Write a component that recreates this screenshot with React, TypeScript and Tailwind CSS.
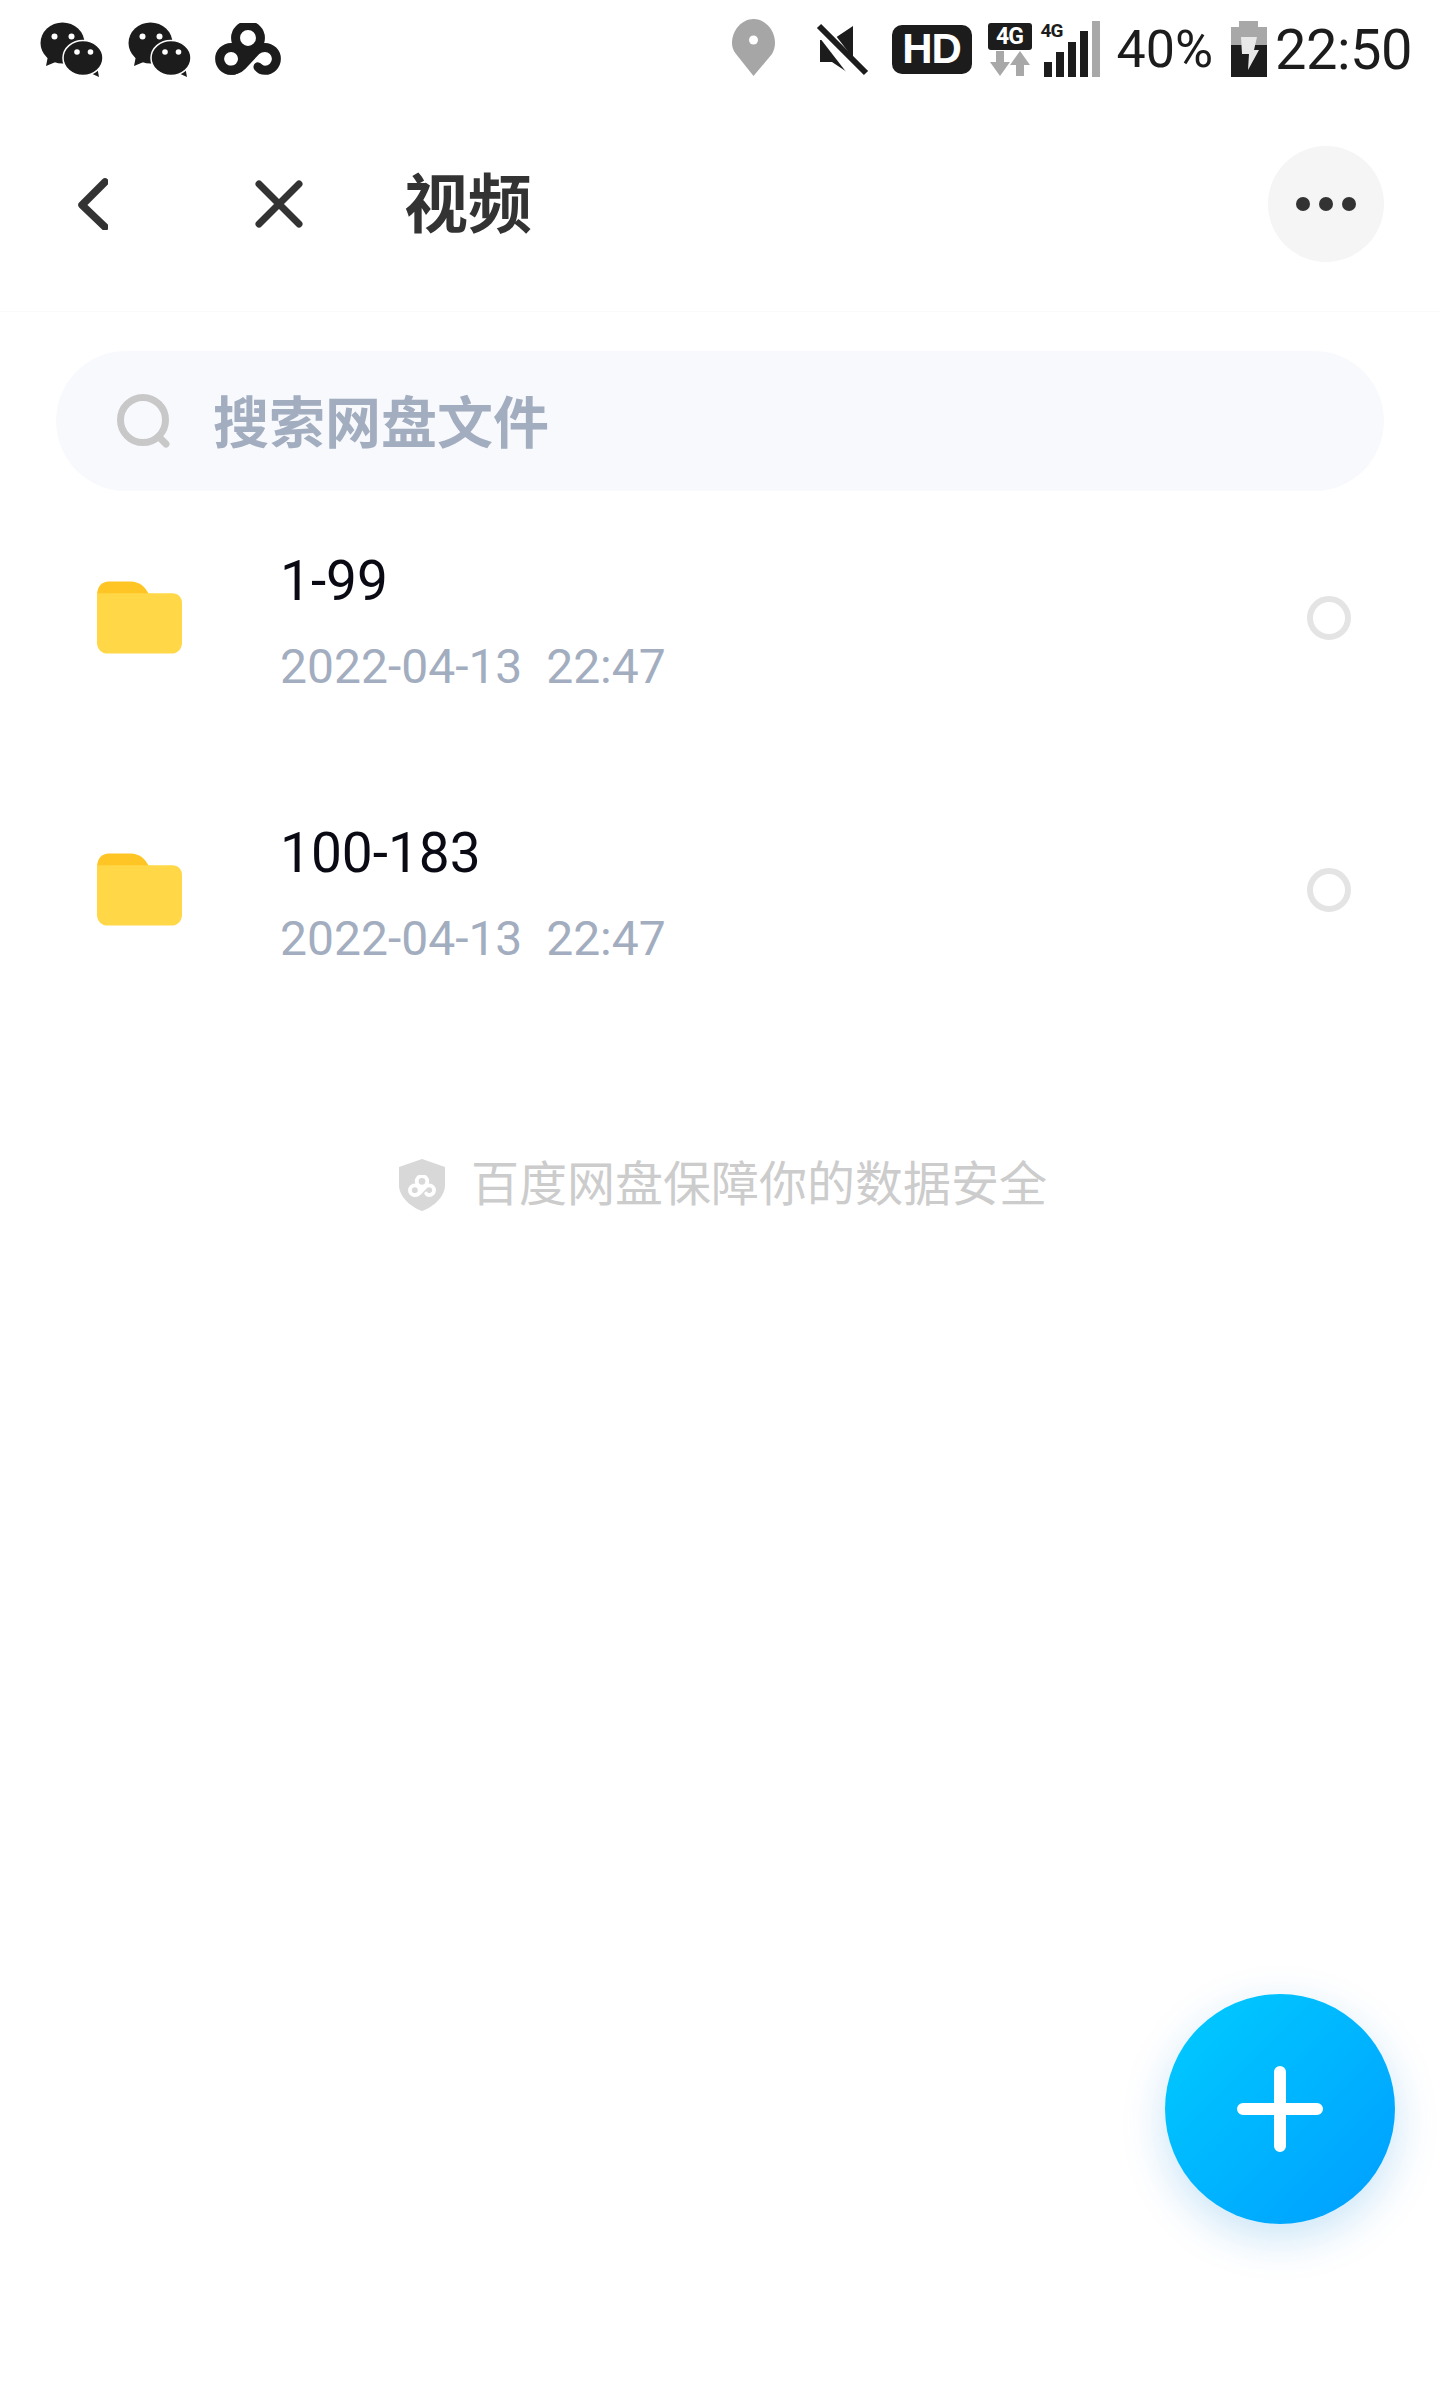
const FONT = "font-['Roboto','Noto_Sans_CJK_SC',sans-serif]";

// ── Status bar icons ───────────────────────────────
function WeChatIcon() {
  return (
    <svg width="64" height="55" viewBox="0 0 64 55" className="shrink-0">
      <path d="M8 34 L6 44 L18 39 Z" fill="#1c1c1c" />
      <ellipse cx="22.5" cy="21" rx="22" ry="20.5" fill="#1c1c1c" />
      <circle cx="14.5" cy="14.5" r="3" fill="#fff" />
      <circle cx="31.5" cy="14.5" r="3" fill="#fff" />
      <path d="M48 50 L59 55 L57 44 Z" fill="#1c1c1c" />
      <ellipse cx="43" cy="36" rx="20" ry="17.5" fill="#1c1c1c" stroke="#fff" strokeWidth="1.5" />
      <circle cx="37" cy="30" r="2.8" fill="#fff" />
      <circle cx="50.5" cy="30" r="2.8" fill="#fff" />
    </svg>
  );
}

function CloudLogo({ size = 66, color = "#1c1c1c" }: { size?: number; color?: string }) {
  return (
    <svg width={size} height={size * 0.8} viewBox="0 0 66 53" fill="none" stroke={color} strokeWidth="9" className="shrink-0">
      <circle cx="33" cy="15" r="12.5" />
      <circle cx="16" cy="36" r="11.5" />
      <path d="M16 47.5 C21 47.5 24 46 27 43 L41 28 C44 25.5 47 24.5 50 24.5 A11.5 11.5 0 1 1 50 47.5 C47 47.5 45 46.5 43 44" strokeLinecap="round" />
    </svg>
  );
}

function PinIcon() {
  return (
    <svg width="43" height="57" viewBox="0 0 43 57" className="mb-[4px] shrink-0">
      <path d="M21.5 0 C33 0 43 11 43 24 C43 28 42 31 40 35 L21.5 57 L4 35 C1 31 0 28 0 24 C0 11 10 0 21.5 0 Z" fill="#a6a6a6" />
      <circle cx="21.5" cy="21" r="4.5" fill="#fff" />
    </svg>
  );
}

function MuteIcon() {
  return (
    <svg width="53" height="53" viewBox="0 0 53 53" className="shrink-0">
      <path d="M4 17 L16 17 L37 3 L37 53 L16 39 L4 39 Z" fill="#1c1c1c" />
      <path d="M-2 -4 L46 58" stroke="#fff" strokeWidth="14" />
      <path d="M3 3 L50 50" stroke="#1c1c1c" strokeWidth="6" />
    </svg>
  );
}

function SignalBars() {
  const bars = [
    { h: 15, c: "#1c1c1c" },
    { h: 25, c: "#1c1c1c" },
    { h: 35, c: "#1c1c1c" },
    { h: 46, c: "#1c1c1c" },
    { h: 56, c: "#a8a8a8" },
  ];
  return (
    <div className="relative flex h-[56px] w-[56px] items-end gap-[4px]">
      <span className="absolute left-[-3px] top-[-1px] text-[19px] font-bold leading-[22px] tracking-[-1px] text-[#1c1c1c]">4G</span>
      {bars.map((b, i) => (
        <div key={i} className="w-[8px]" style={{ height: b.h, backgroundColor: b.c }} />
      ))}
    </div>
  );
}

function BatteryIcon() {
  return (
    <svg width="36" height="56" viewBox="0 0 36 56" className="shrink-0">
      <rect x="8" y="0" width="19" height="7" fill="#a8a8a8" />
      <rect x="0" y="6" width="36" height="18" fill="#a8a8a8" />
      <rect x="0" y="24" width="36" height="32" fill="#1c1c1c" />
      <path d="M10 16 L26 16 L23 29 L28 29 L17 49 L18 33 L11 33 Z" fill="#e8e8e8" />
    </svg>
  );
}

function StatusBar() {
  return (
    <div className="flex h-[100px] shrink-0 items-center pb-[2px] pl-[40px] pr-[28px]">
      <div className="flex items-center gap-[24px]">
        <WeChatIcon />
        <WeChatIcon />
        <div className="ml-[-1px]">
          <CloudLogo />
        </div>
      </div>
      <div className="ml-auto flex items-center">
        <PinIcon />
        <div className="ml-[41px]">
          <MuteIcon />
        </div>
        <div className="ml-[23px] flex h-[49px] w-[80px] items-center justify-center rounded-[10px] bg-[#1c1c1c] font-['Liberation_Sans',sans-serif] text-[42px] font-bold leading-none tracking-[-1px] text-white">
          HD
        </div>
        <div className="ml-[16px] flex w-[44px] flex-col items-center gap-[1px]">
          <div className="flex h-[27px] w-[44px] items-center justify-center rounded-[3px] bg-[#1c1c1c] text-[23px] font-bold leading-none tracking-[-1px] text-white">
            4G
          </div>
          <svg width="40" height="25" viewBox="0 0 40 25">
            <path d="M6 0 H14 V11 H20 L10 25 L0 11 H6 Z" fill="#a8a8a8" />
            <path d="M26 25 H34 V14 H40 L30 0 L20 14 H26 Z" fill="#a8a8a8" />
          </svg>
        </div>
        <div className="ml-[12px]">
          <SignalBars />
        </div>
        <span className="ml-[17px] mt-[2px] text-[52px] leading-none text-[#1c1c1c]">40%</span>
        <div className="ml-[18px]">
          <BatteryIcon />
        </div>
        <span className="ml-[8px] mt-[2px] text-[56px] leading-none tracking-[-0.5px] text-[#1c1c1c]">22:50</span>
      </div>
    </div>
  );
}

// ── Page parts ─────────────────────────────────────
function Header() {
  return (
    <div className="flex h-[212px] shrink-0 items-center border-b border-[#fafafa] pb-[3px] pl-[78px] pr-[56px]">
      <svg width="30" height="52" viewBox="0 0 30 52" fill="none" stroke="#333" strokeWidth="7.5" strokeLinecap="round" strokeLinejoin="round" className="shrink-0">
        <path d="M27 4 L4 27 L27 49" />
      </svg>
      <svg width="48" height="48" viewBox="0 0 48 48" fill="none" stroke="#333" strokeWidth="7" strokeLinecap="round" className="ml-[147px] shrink-0">
        <path d="M4 4 L44 44 M44 4 L4 44" />
      </svg>
      <h1 className="ml-[101px] mt-[4px] text-[64px] font-bold leading-none text-[#333]">视频</h1>
      <button className="ml-auto flex h-[116px] w-[116px] items-center justify-center gap-[9px] rounded-full bg-[#f5f5f5]">
        <span className="h-[14px] w-[14px] rounded-full bg-[#333]" />
        <span className="h-[14px] w-[14px] rounded-full bg-[#333]" />
        <span className="h-[14px] w-[14px] rounded-full bg-[#333]" />
      </button>
    </div>
  );
}

function SearchBar() {
  return (
    <div className="mx-[56px] mt-[39px] flex h-[140px] shrink-0 items-center rounded-full bg-[#f7f9fc] pl-[61px]">
      <svg width="54" height="54" viewBox="0 0 54 54" fill="none" stroke="#c8c8c8" strokeWidth="7" strokeLinecap="round" className="shrink-0">
        <ellipse cx="26" cy="26" rx="22.5" ry="22.5" />
        <path d="M42 43 L49 50" />
      </svg>
      <span className="ml-[42px] mt-[5px] text-[56px] font-bold leading-none text-[#a3adc0]">搜索网盘文件</span>
    </div>
  );
}

function FolderIcon() {
  return (
    <svg width="85" height="73" viewBox="0 0 86 73" className="mb-[2px] shrink-0">
      <path d="M0 14 C0 5 5 0 12 0 H34 C43 0 48 5 52 12 L52 24 H0 Z" fill="#ffc524" />
      <path d="M0 12 H76 C82 12 86 16 86 22 V62 C86 69 81 73 75 73 H11 C5 73 0 69 0 62 Z" fill="#ffd747" />
    </svg>
  );
}

function FileRow({ name, date }: { name: string; date: string }) {
  return (
    <div className="flex h-[166px] items-center pl-[97px] pr-[89px]">
      <FolderIcon />
      <div className="ml-[98px] mt-[12px] flex flex-col">
        <span className="text-[55px] leading-[80px] text-[#0a0a14]">{name}</span>
        <span className="mt-[6px] whitespace-pre text-[48px] leading-[80px] text-[#a3adc0]">{date}</span>
      </div>
      <span className="ml-auto h-[44px] w-[44px] rounded-full border-[6px] border-[#e4e4e4]" />
    </div>
  );
}

function Footer() {
  return (
    <div className="mt-[186px] flex items-center justify-center pl-[6px]">
      <div className="relative flex h-[52px] w-[46px] items-center justify-center">
        <svg width="46" height="52" viewBox="0 0 46 52" className="absolute inset-0">
          <path d="M23 0 L46 8 V26 C46 38 34 48 23 52 C12 48 0 38 0 26 V8 Z" fill="#d8d8d8" />
        </svg>
        <div className="relative mt-[2px]">
          <CloudLogo size={28} color="#fff" />
        </div>
      </div>
      <span className="ml-[26px] text-[48px] leading-none text-[#cccccc]">百度网盘保障你的数据安全</span>
    </div>
  );
}

export default function App() {
  return (
    <div className={`${FONT} relative flex h-[2392px] w-[1440px] flex-col overflow-hidden bg-white`}>
      <StatusBar />
      <Header />
      <SearchBar />
      <div className="mt-[44px] flex flex-col gap-[106px]">
        <FileRow name="1-99" date="2022-04-13  22:47" />
        <FileRow name="100-183" date="2022-04-13  22:47" />
      </div>
      <Footer />
      <button className="absolute left-[1165px] top-[1994px] flex h-[230px] w-[230px] items-center justify-center rounded-full bg-gradient-to-br from-[#00ccff] to-[#009dff] shadow-[0_14px_44px_rgba(0,130,220,0.22)]">
        <svg width="86" height="86" viewBox="0 0 86 86" stroke="#fff" strokeWidth="12" strokeLinecap="round">
          <path d="M43 6 V80 M6 43 H80" />
        </svg>
      </button>
    </div>
  );
}
